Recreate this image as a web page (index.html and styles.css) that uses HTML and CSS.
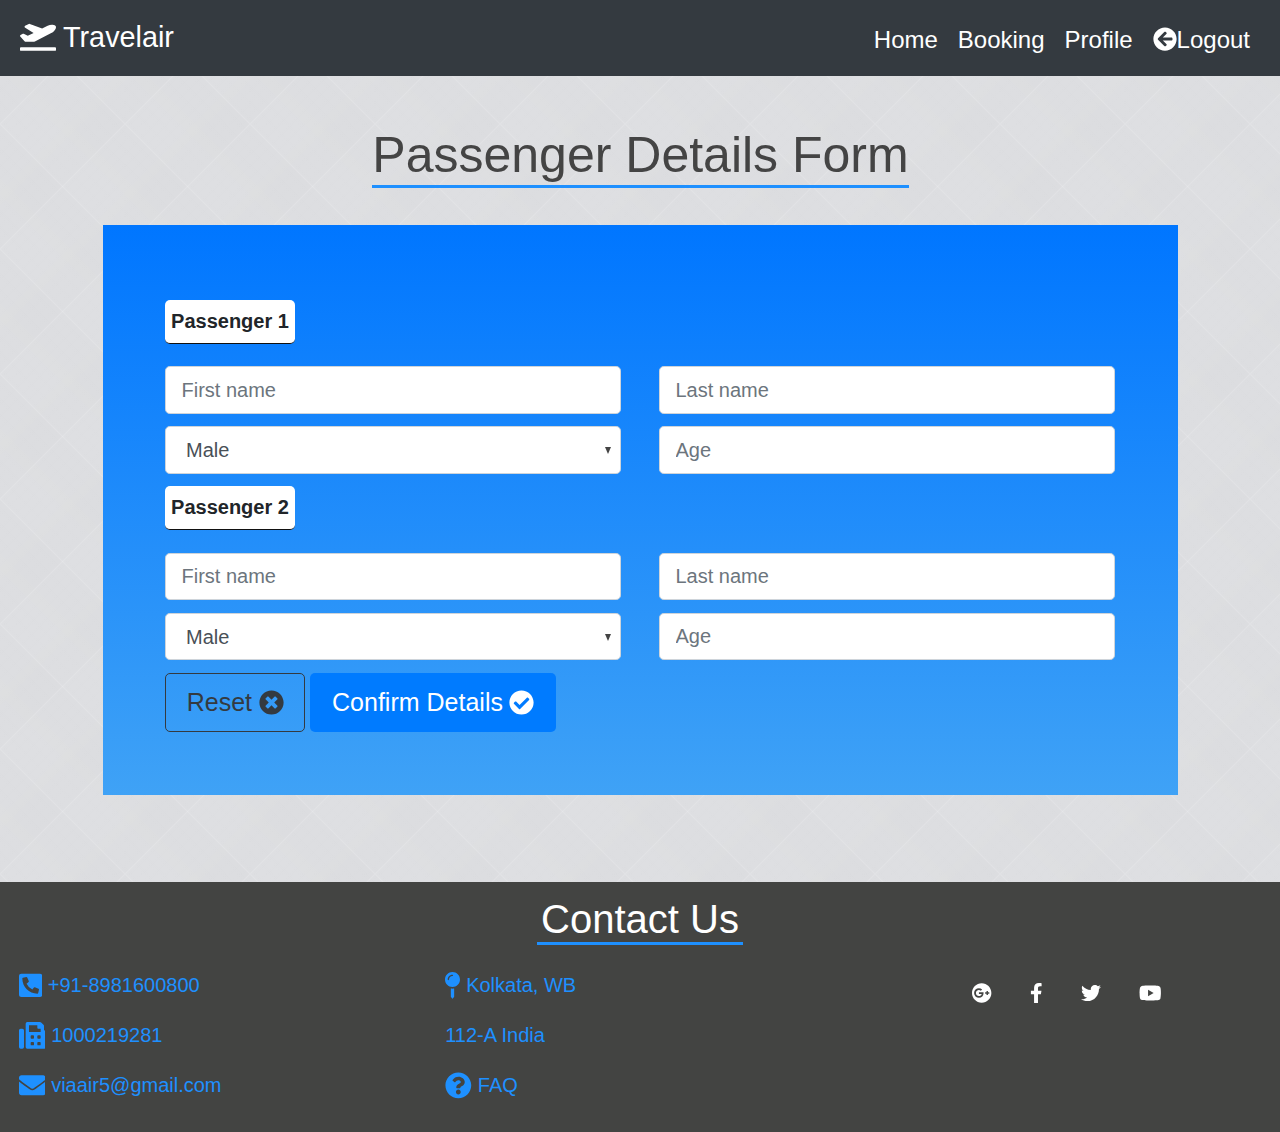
FILE: index.html
```html
<!DOCTYPE html>
<html>
  <head>
    <title>Travelair</title>
    <link rel="stylesheet" href="styles.css">
  </head>
  <body>
    <!-- Navbar -->
    <nav class="navbar">
      <a class="brand" href="#">
        <svg class="brand-icon" viewBox="0 0 640 512"><path d="M624 448H16c-8.84 0-16 7.16-16 16v32c0 8.84 7.16 16 16 16h608c8.84 0 16-7.16 16-16v-32c0-8.84-7.16-16-16-16zM80.55 341.27c6.28 6.84 15.1 10.72 24.33 10.71l130.54-.18a65.62 65.62 0 0 0 29.64-7.12l290.96-147.65c26.74-13.57 50.71-32.94 67.02-58.31 18.31-28.48 20.3-49.09 13.07-63.65-7.21-14.57-24.74-25.27-58.25-27.45-29.85-1.94-59.54 5.92-86.28 19.48l-98.51 49.99-218.7-82.06a17.799 17.799 0 0 0-18-1.11L90.62 67.29c-10.67 5.41-13.25 19.65-5.17 28.53l156.22 98.1-103.21 52.38-72.35-36.47a17.804 17.804 0 0 0-16.07.02L9.91 230.22c-10.44 5.3-13.19 19.12-5.57 28.08l76.21 82.97z"/></svg>
        <span class="brand-text">Travelair</span>
      </a>
      <div class="nav-links">
        <a href="#">Home</a>
        <a href="#">Booking</a>
        <a href="#">Profile</a>
        <a class="logout" href="#">
          <svg class="logout-icon" viewBox="0 0 512 512"><path d="M256 504C119 504 8 393 8 256S119 8 256 8s248 111 248 248-111 248-248 248zm28.9-143.6L209.4 288H392c13.3 0 24-10.7 24-24v-16c0-13.3-10.7-24-24-24H209.4l75.5-72.4c9.7-9.3 9.9-24.8.4-34.3l-11-10.9c-9.4-9.4-24.6-9.4-33.9 0L107.7 239c-9.4 9.4-9.4 24.6 0 33.9l132.7 132.7c9.4 9.4 24.6 9.4 33.9 0l11-10.9c9.5-9.5 9.3-25-.4-34.3z"/></svg>Logout
        </a>
      </div>
    </nav>

    <!-- Passenger Form -->
    <main class="page">
      <div class="title-wrap">
        <h1 class="title">Passenger Details Form</h1>
      </div>
      <form class="card">
        <div class="passenger-label">Passenger 1</div>
        <div class="field-row">
          <input class="form-control" type="text" placeholder="First name" />
          <input class="form-control" type="text" placeholder="Last name" />
        </div>
        <div class="field-row">
          <div class="select-wrap">
            <select class="form-control">
              <option>Male</option>
              <option>Female</option>
            </select>
          </div>
          <input class="form-control" type="text" placeholder="Age" />
        </div>

        <div class="passenger-label">Passenger 2</div>
        <div class="field-row">
          <input class="form-control" type="text" placeholder="First name" />
          <input class="form-control" type="text" placeholder="Last name" />
        </div>
        <div class="field-row">
          <div class="select-wrap">
            <select class="form-control">
              <option>Male</option>
              <option>Female</option>
            </select>
          </div>
          <input class="form-control" type="text" placeholder="Age" />
        </div>

        <div class="form-buttons">
          <button class="btn btn-reset" type="reset">
            Reset
            <svg class="btn-icon" viewBox="0 0 512 512"><path d="M256 8C119 8 8 119 8 256s111 248 248 248 248-111 248-248S393 8 256 8zm121.6 313.1c4.7 4.7 4.7 12.3 0 17L338 377.6c-4.7 4.7-12.3 4.7-17 0L256 312l-65.1 65.6c-4.7 4.7-12.3 4.7-17 0L134.4 338c-4.7-4.7-4.7-12.3 0-17l65.6-65-65.6-65.1c-4.7-4.7-4.7-12.3 0-17l39.6-39.6c4.7-4.7 12.3-4.7 17 0l65 65.7 65.1-65.6c4.7-4.7 12.3-4.7 17 0l39.6 39.6c4.7 4.7 4.7 12.3 0 17L312 256l65.6 65.1z"/></svg>
          </button>
          <button class="btn btn-confirm" type="submit">
            Confirm Details
            <svg class="btn-icon" viewBox="0 0 512 512"><path d="M504 256c0 136.967-111.033 248-248 248S8 392.967 8 256 119.033 8 256 8s248 111.033 248 248zM227.314 387.314l184-184c6.248-6.248 6.248-16.379 0-22.627l-22.627-22.627c-6.248-6.249-16.379-6.249-22.628 0L216 308.118l-70.059-70.059c-6.248-6.248-16.379-6.248-22.628 0l-22.627 22.627c-6.248 6.248-6.248 16.379 0 22.627l104 104c6.249 6.249 16.379 6.249 22.628.001z"/></svg>
          </button>
        </div>
      </form>
    </main>

    <!-- Footer -->
    <footer class="footer">
      <div class="title-wrap">
        <h2 class="contact-title">Contact Us</h2>
      </div>
      <div class="footer-cols">
        <div class="footer-col">
          <a class="footer-link" href="#">
            <svg class="footer-icon" viewBox="0 0 448 512"><path d="M400 32H48A48 48 0 0 0 0 80v352a48 48 0 0 0 48 48h352a48 48 0 0 0 48-48V80a48 48 0 0 0-48-48zm-16.39 307.37l-15 65A15 15 0 0 1 354 416C194 416 64 286.29 64 126a15.7 15.7 0 0 1 11.63-14.61l65-15A18.23 18.23 0 0 1 144 96a16.27 16.27 0 0 1 13.79 9.09l30 70A17.9 17.9 0 0 1 189 181a17 17 0 0 1-5.5 11.61l-37.89 31a231.91 231.91 0 0 0 110.78 110.78l31-37.89A17 17 0 0 1 299 291a17.85 17.85 0 0 1 5.91 1.21l70 30A16.25 16.25 0 0 1 384 336a17.41 17.41 0 0 1-.39 3.37z"/></svg>
            +91-8981600800
          </a>
          <a class="footer-link" href="#">
            <svg class="footer-icon" viewBox="0 0 512 512"><path d="M480 160V77.25a32 32 0 0 0-9.38-22.63L425.37 9.37A32 32 0 0 0 402.75 0H160a32 32 0 0 0-32 32v448a32 32 0 0 0 32 32h320a32 32 0 0 0 32-32V192a32 32 0 0 0-32-32zM288 432a16 16 0 0 1-16 16h-32a16 16 0 0 1-16-16v-32a16 16 0 0 1 16-16h32a16 16 0 0 1 16 16zm0-128a16 16 0 0 1-16 16h-32a16 16 0 0 1-16-16v-32a16 16 0 0 1 16-16h32a16 16 0 0 1 16 16zm128 128a16 16 0 0 1-16 16h-32a16 16 0 0 1-16-16v-32a16 16 0 0 1 16-16h32a16 16 0 0 1 16 16zm0-128a16 16 0 0 1-16 16h-32a16 16 0 0 1-16-16v-32a16 16 0 0 1 16-16h32a16 16 0 0 1 16 16zm0-112H192V64h160v48a16 16 0 0 0 16 16h48zM64 128H32a32 32 0 0 0-32 32v320a32 32 0 0 0 32 32h32a32 32 0 0 0 32-32V160a32 32 0 0 0-32-32z"/></svg>
            1000219281
          </a>
          <a class="footer-link" href="#">
            <svg class="footer-icon" viewBox="0 0 512 512"><path d="M502.3 190.8c3.9-3.1 9.7-.2 9.7 4.7V400c0 26.5-21.5 48-48 48H48c-26.5 0-48-21.5-48-48V195.6c0-5 5.7-7.8 9.7-4.7 22.4 17.4 52.1 39.5 154.1 113.6 21.1 15.4 56.7 47.8 92.2 47.6 35.7.3 72-32.8 92.3-47.6 102-74.1 131.6-96.3 154-113.7zM256 320c23.2.4 56.6-29.2 73.4-41.4 132.7-96.3 142.8-104.7 173.4-128.7 5.8-4.5 9.2-11.5 9.2-18.9v-19c0-26.5-21.5-48-48-48H48C21.5 64 0 85.5 0 112v19c0 7.4 3.4 14.3 9.2 18.9 30.6 23.9 40.7 32.4 173.4 128.7 16.8 12.2 50.2 41.8 73.4 41.4z"/></svg>
            viaair5@gmail.com
          </a>
        </div>
        <div class="footer-col">
          <a class="footer-link" href="#">
            <svg class="footer-icon" viewBox="0 0 288 512"><path d="M112 316.94v156.69l22.02 33.02c4.75 7.12 15.22 7.12 19.97 0L176 473.63V316.94c-10.39 1.92-21.06 3.06-32 3.06s-21.61-1.14-32-3.06zM144 0C64.47 0 0 64.47 0 144s64.47 144 144 144 144-64.47 144-144S223.53 0 144 0zm0 76c-37.5 0-68 30.5-68 68 0 6.62-5.38 12-12 12s-12-5.38-12-12c0-50.73 41.28-92 92-92 6.62 0 12 5.38 12 12s-5.38 12-12 12z"/></svg>
            Kolkata, WB
          </a>
          <a class="footer-link" href="#">112-A India</a>
          <a class="footer-link" href="#">
            <svg class="footer-icon" viewBox="0 0 512 512"><path d="M504 256c0 136.997-111.043 248-248 248S8 392.997 8 256C8 119.083 119.043 8 256 8s248 111.083 248 248zM262.655 90c-54.497 0-89.255 22.957-116.549 63.758-3.536 5.286-2.353 12.415 2.715 16.258l34.699 26.31c5.205 3.947 12.621 3.008 16.665-2.122 17.864-22.658 30.113-35.797 57.303-35.797 20.429 0 45.698 13.148 45.698 32.958 0 14.976-12.363 22.667-32.534 33.976C247.128 238.528 216 254.941 216 296v4c0 6.627 5.373 12 12 12h56c6.627 0 12-5.373 12-12v-1.333c0-28.462 83.186-29.647 83.186-106.667 0-58.002-60.165-102-116.531-102zM256 338c-25.365 0-46 20.635-46 46 0 25.364 20.635 46 46 46s46-20.636 46-46c0-25.365-20.635-46-46-46z"/></svg>
            FAQ
          </a>
        </div>
        <div class="footer-col">
          <div class="social">
            <a href="#"><svg class="social-icon" viewBox="0 0 496 512"><path transform="translate(-8 0)" d="M256,8C119.1,8,8,119.1,8,256S119.1,504,256,504,504,392.9,504,256,392.9,8,256,8ZM185.3,380a124,124,0,0,1,0-248c31.3,0,60.1,11,83,32.3l-33.6,32.6c-13.2-12.9-31.3-19.1-49.4-19.1-42.9,0-77.2,35.5-77.2,78.1S142.3,334,185.3,334c32.6,0,64.9-19.1,70.1-53.3H185.3V238.1H302.2a109.2,109.2,0,0,1,1.9,20.7c0,70.8-47.5,121.2-118.8,121.2ZM415.5,273.8v35.5H380V273.8H344.5V238.3H380V202.8h35.5v35.5h35.2v35.5Z"/></svg></a>
            <a href="#"><svg class="social-icon" viewBox="0 0 320 512"><path d="M279.14 288l14.22-92.66h-88.91v-60.13c0-25.35 12.42-50.06 52.24-50.06h40.42V6.26S260.43 0 225.36 0c-73.22 0-121.08 44.38-121.08 124.72v70.62H22.89V288h81.39v224h100.17V288z"/></svg></a>
            <a href="#"><svg class="social-icon" viewBox="0 0 512 512"><path d="M459.37 151.716c.325 4.548.325 9.097.325 13.645 0 138.72-105.583 298.558-298.558 298.558-59.452 0-114.68-17.219-161.137-47.106 8.447.974 16.568 1.299 25.34 1.299 49.055 0 94.213-16.568 130.274-44.832-46.132-.975-84.792-31.188-98.112-72.772 6.498.974 12.995 1.624 19.818 1.624 9.421 0 18.843-1.3 27.614-3.573-48.081-9.747-84.143-51.98-84.143-102.985v-1.299c13.969 7.797 30.214 12.67 47.431 13.319-28.264-18.843-46.781-51.005-46.781-87.391 0-19.492 5.197-37.36 14.294-52.954 51.655 63.675 129.3 105.258 216.365 109.807-1.624-7.797-2.599-15.918-2.599-24.04 0-57.828 46.782-104.934 104.934-104.934 30.213 0 57.502 12.67 76.67 33.137 23.715-4.548 46.456-13.32 66.599-25.34-7.798 24.366-24.366 44.833-46.132 57.827 21.117-2.273 41.584-8.122 60.426-16.243-14.292 20.791-32.161 39.308-52.628 54.253z"/></svg></a>
            <a href="#"><svg class="social-icon" viewBox="0 0 576 512"><path d="M549.655 124.083c-6.281-23.65-24.787-42.276-48.284-48.597C458.781 64 288 64 288 64S117.22 64 74.629 75.486c-23.497 6.322-42.003 24.947-48.284 48.597-11.412 42.867-11.412 132.305-11.412 132.305s0 89.438 11.412 132.305c6.281 23.65 24.787 41.5 48.284 47.821C117.22 448 288 448 288 448s170.78 0 213.371-11.486c23.497-6.321 42.003-24.171 48.284-47.821 11.412-42.867 11.412-132.305 11.412-132.305s0-89.438-11.412-132.305zm-317.51 213.508V175.185l142.739 81.205-142.739 81.201z"/></svg></a>
          </div>
        </div>
      </div>
    </footer>
  </body>
</html>
```

FILE: styles.css
```css
* {
  box-sizing: border-box;
}

body {
  margin: 0;
  font-family: "Liberation Sans", Arial, Helvetica, sans-serif;
  color: #212529;
}

a {
  text-decoration: none;
}

svg {
  display: block;
  fill: currentColor;
}

/* Navbar */
.navbar {
  height: 76px;
  padding: 0 30px 0 20px;
  background-color: #343a40;
  display: flex;
  align-items: center;
  justify-content: space-between;
}

.brand {
  display: flex;
  align-items: center;
  gap: 7px;
  color: #fff;
  font-size: 28.8px;
  margin-top: -3px;
}

.brand-icon {
  width: 36px;
  height: 28.8px;
}

.brand-text {
  margin-top: 2px;
}

.nav-links {
  display: flex;
  align-items: center;
  gap: 20px;
  margin-top: 3px;
}

.nav-links a {
  color: #fff;
  font-size: 24px;
}

.logout {
  display: flex;
  align-items: center;
}

.logout-icon {
  width: 24px;
  height: 24px;
  margin-top: -2px;
}

/* Main area */
.page {
  padding: 49px 102px 87px 103px;
  background-color: #dcdde0;
  background-image:
    linear-gradient(45deg, transparent calc(50% - 1px), rgba(255, 255, 255, 0.15) 50%, transparent calc(50% + 1px)),
    linear-gradient(-45deg, transparent calc(50% - 1px), rgba(255, 255, 255, 0.15) 50%, transparent calc(50% + 1px)),
    linear-gradient(135deg, rgba(255, 255, 255, 0.04), transparent 50%, rgba(255, 255, 255, 0.04) 50%, transparent),
    linear-gradient(45deg, rgba(255, 255, 255, 0.03), transparent 50%, rgba(255, 255, 255, 0.03) 50%, transparent);
  background-size: 125px 125px;
  background-position: 0 48px;
}

.title-wrap {
  text-align: center;
}

.title {
  display: inline-block;
  margin: 0 0 37px;
  font-size: 50px;
  font-weight: 400;
  line-height: 60px;
  color: #444;
  border-bottom: 3px solid #1e90ff;
}

.card {
  padding: 74.75px 63px 63px 62px;
  background: linear-gradient(#0076ff, #3fa2f6);
}

.passenger-label {
  width: 130px;
  height: 44px;
  margin-bottom: 22.5px;
  background-color: #fff;
  border-bottom: 1px solid #111;
  border-radius: 5px;
  font-size: 20px;
  font-weight: 700;
  line-height: 43px;
  text-align: center;
}

.field-row {
  display: grid;
  grid-template-columns: 456px 456px;
  column-gap: 38px;
  margin-bottom: 12.5px;
}

.form-control {
  display: block;
  width: 100%;
  height: 47.5px;
  padding: 8px 15.5px;
  font-family: inherit;
  font-size: 20px;
  color: #495057;
  background-color: #fff;
  border: 1px solid #ced4da;
  border-radius: 4.8px;
}

.form-control::placeholder {
  color: #6c757d;
}

select.form-control {
  appearance: none;
  padding-left: 20px;
}

.select-wrap {
  position: relative;
}

.select-wrap::after {
  content: "";
  position: absolute;
  top: 21px;
  right: 10px;
  border-left: 3.5px solid transparent;
  border-right: 3.5px solid transparent;
  border-top: 7px solid #444;
}

.form-buttons {
  display: flex;
  gap: 5px;
}

.btn {
  display: flex;
  align-items: center;
  gap: 6.5px;
  height: 59.5px;
  padding: 0 20.75px;
  font-family: inherit;
  font-size: 25px;
  border: 1px solid transparent;
  border-radius: 5px;
  cursor: pointer;
}

.btn-icon {
  width: 25px;
  height: 25px;
}

.btn-reset {
  color: #343a40;
  background: transparent;
  border-color: #343a40;
}

.btn-confirm {
  color: #fff;
  background-color: #007bff;
}

/* Footer */
.footer {
  height: 250px;
  padding-top: 14px;
  background-color: #434442;
}

.contact-title {
  display: inline-block;
  margin: 0;
  padding: 0 4px;
  font-size: 40px;
  font-weight: 400;
  line-height: 46px;
  color: #fff;
  border-bottom: 3px solid #1e90ff;
}

.footer-cols {
  display: grid;
  grid-template-columns: repeat(3, 1fr);
  margin-top: 15px;
}

.footer-col {
  padding-left: 18.5px;
}

.footer-link {
  height: 50px;
  display: flex;
  align-items: center;
  gap: 6px;
  color: #1e90ff;
  font-size: 20px;
}

.footer-icon {
  height: 26.67px;
  width: auto;
}

.social {
  display: flex;
  align-items: center;
  gap: 38.2px;
  margin: 23px 0 0 100.5px;
  height: 20px;
}

.social a {
  color: #fff;
}

.social-icon {
  height: 20px;
  width: auto;
}
```
